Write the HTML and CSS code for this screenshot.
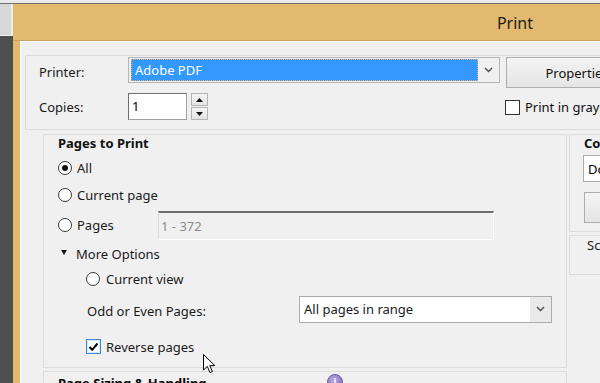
FILE: index.html
```html
<!DOCTYPE html>
<html lang="en">
<head>
    <meta charset="UTF-8">
    <title>Print</title>
    <link rel="stylesheet" href="styles.css">
</head>
<body>

<div class="topline"></div>
<div class="screen">
    <div class="side"><div class="side-tab"></div></div>

    <div class="win">
        <div class="titlebar">Print</div>
        <div class="frame">
            <div class="client">

                <!-- printer / copies -->
                <div class="printer-panel">
                    <div class="prow prow-printer">
                        <span class="plabel">Printer:</span>
                        <div class="combo combo-printer">
                            <span class="combo-value"><span class="selected">Adobe PDF</span></span>
                            <span class="combo-arrow">
                                <svg width="9" height="6" viewBox="0 0 9 6"><path d="M1 1 L4.5 4.5 L8 1" fill="none" stroke="#4a4a4a" stroke-width="1.4"/></svg>
                            </span>
                        </div>
                        <button class="btn btn-props">Properties</button>
                    </div>
                    <div class="prow prow-copies">
                        <span class="plabel">Copies:</span>
                        <div class="spin-input">1</div>
                        <div class="spinner">
                            <span class="spin-btn">
                                <svg width="7" height="4" viewBox="0 0 7 4"><path d="M0 4 L3.5 0 L7 4 Z" fill="#111"/></svg>
                            </span>
                            <span class="spin-btn">
                                <svg width="7" height="4" viewBox="0 0 7 4"><path d="M0 0 L3.5 4 L7 0 Z" fill="#111"/></svg>
                            </span>
                        </div>
                        <label class="check check-gray"><span class="box"></span>Print in grayscale (black and white)</label>
                    </div>
                </div>

                <div class="main">
                    <!-- Pages to Print -->
                    <div class="group pages-group">
                        <div class="group-title">Pages to Print</div>
                        <div class="opt opt-all"><span class="radio checked"></span>All</div>
                        <div class="opt opt-current"><span class="radio"></span>Current page</div>
                        <div class="opt opt-pages">
                            <span class="radio"></span><span class="opt-pages-label">Pages</span>
                            <div class="range-input">1 - 372</div>
                        </div>
                        <div class="opt opt-more"><span class="tri"></span>More Options</div>
                        <div class="opt opt-view"><span class="radio"></span>Current view</div>
                        <div class="opt opt-odd">
                            <span class="odd-label">Odd or Even Pages:</span>
                            <div class="combo combo-odd">
                                <span class="combo-value">All pages in range</span>
                                <span class="combo-arrow">
                                    <svg width="9" height="6" viewBox="0 0 9 6"><path d="M1 1 L4.5 4.5 L8 1" fill="none" stroke="#4a4a4a" stroke-width="1.4"/></svg>
                                </span>
                            </div>
                        </div>
                        <div class="opt opt-reverse">
                            <span class="box checked">
                                <svg width="11" height="10" viewBox="0 0 11 10"><path d="M1.5 5 L4.2 7.8 L9.5 1.5" fill="none" stroke="#000" stroke-width="2"/></svg>
                            </span>Reverse pages
                        </div>
                    </div>

                    <!-- right column -->
                    <div class="right-col">
                        <div class="group comments-group">
                            <div class="group-title">Comments &amp; Forms</div>
                            <div class="combo combo-comments"><span class="combo-value">Document and Markups</span></div>
                            <button class="btn btn-summarize">Summarize Comments</button>
                        </div>
                        <div class="group scale-group">
                            <div class="scale-text">Scale: 100%</div>
                        </div>
                    </div>
                </div>

                <div class="group sizing-group">
                    <div class="sizing-title">
                        <span class="sizing-text">Page Sizing &amp; Handling</span>
                        <span class="info">i</span>
                    </div>
                </div>

            </div>
        </div>
    </div>
</div>

<svg class="cursor" width="13" height="20" viewBox="0 0 13 20">
    <path d="M0.5 0.5 L0.5 16 L4.3 12.4 L7 18.6 L9.4 17.6 L6.8 11.6 L11.8 11.6 Z" fill="#fff" stroke="#000" stroke-width="1" stroke-linejoin="round"/>
</svg>

</body>
</html>
```

FILE: styles.css
```css
body {
    margin: 0;
    width: 600px;
    height: 383px;
    overflow: hidden;
    position: relative;
    font-family: 'Noto Sans', 'DejaVu Sans', sans-serif;
    font-size: 13px;
    color: #000;
    background: #4f4f4f;
}

.topline {
    height: 3px;
    background: #e9e9e9;
    border-bottom: 1px solid #707070;
}

.screen {
    display: flex;
    height: 379px;
}

/* left bit of the app behind the dialog */
.side {
    width: 13px;
    flex-shrink: 0;
    background: #4f4f4f;
}

.side-tab {
    height: 31px;
    background: #d7d7d7;
    border-right: 2px solid #ededed;
    border-bottom: 1px solid #f2f2f2;
}

.win {
    flex: 1;
    display: flex;
    flex-direction: column;
    background: #e2b96f;
    min-width: 0;
}

.titlebar {
    height: 37px;
    border-bottom: 1px solid #c9a35f;
    display: flex;
    align-items: center;
    justify-content: flex-end;
    padding-right: 67px;
    padding-top: 2px;
    box-sizing: border-box;
    font-size: 16px;
    color: #1e1e1e;
}

.frame {
    flex: 1;
    display: flex;
    padding-left: 7px;
    min-height: 0;
}

.client {
    flex: 1;
    background: #f0f0f0;
    border-left: 1px solid #fff;
    border-top: 1px solid #fff;
    padding: 13px 0 0 4px;
    overflow: hidden;
    white-space: nowrap;
}

/* printer panel */
.printer-panel {
    border: 1px solid #dadada;
    border-right: none;
    padding: 1px 0 9px 13px;
}

.prow {
    display: flex;
    align-items: flex-start;
}

.prow > * {
    flex-shrink: 0;
}

.plabel {
    width: 89px;
    line-height: 20px;
    color: #1a1a1a;
}

.prow-printer .plabel {
    padding-top: 5px;
}

.combo {
    display: flex;
    box-sizing: border-box;
    border: 1px solid #acacac;
    background: #fff;
}

.combo-value {
    flex: 1;
    display: flex;
    align-items: center;
    padding-left: 4px;
    overflow: hidden;
}

.combo-arrow {
    width: 21px;
    display: flex;
    align-items: center;
    justify-content: center;
    background: #eaeaea;
}

.combo-printer {
    width: 372px;
    height: 26px;
    background: #f0f0f0;
    border-color: #b5b5b5;
}

.combo-printer .combo-value {
    padding: 1px 0 1px 2px;
}

.selected {
    display: flex;
    align-items: center;
    width: 100%;
    height: 100%;
    box-sizing: border-box;
    background: #3399ff;
    color: #fff;
    padding-left: 3px;
    border: 1px dotted #e8a86a;
}

.combo-printer .combo-arrow {
    background: #f0f0f0;
}

.btn {
    font-family: inherit;
    font-size: 13px;
    color: #111;
    border: 1px solid #adadad;
    background: linear-gradient(#f3f3f3, #e5e5e5);
    padding: 0;
    white-space: nowrap;
}

.btn-props {
    width: 142px;
    height: 31px;
    margin-left: 6px;
}

.prow-copies {
    margin-top: 5px;
}

.prow-copies .plabel {
    padding-top: 4px;
}

.spin-input {
    width: 59px;
    height: 27px;
    box-sizing: border-box;
    background: #fff;
    border: 1px solid #a0a0a0;
    border-top-color: #707070;
    border-left-color: #707070;
    padding: 3px 0 0 3px;
    line-height: 18px;
}

.spinner {
    margin-left: 4px;
    display: flex;
    flex-direction: column;
    gap: 1px;
}

.spin-btn {
    width: 17px;
    height: 13px;
    box-sizing: border-box;
    border: 1px solid #b4b4b4;
    background: linear-gradient(#f4f4f4, #e4e4e4);
    display: flex;
    align-items: center;
    justify-content: center;
}

.check {
    display: flex;
    align-items: center;
    gap: 5px;
    color: #111;
}

.check-gray {
    margin-left: 297px;
    margin-top: 5px;
}

.box {
    width: 13px;
    height: 13px;
    border: 1px solid #333;
    background: #fff;
    display: inline-flex;
    align-items: center;
    justify-content: center;
    flex-shrink: 0;
}

.box.checked {
    border-color: #3c8ad6;
    box-shadow: inset 0 0 0 1px #d8eaff;
}

/* groups */
.main {
    display: flex;
    gap: 2px;
    margin-top: 4px;
    padding-left: 18px;
}

.main > * {
    flex-shrink: 0;
}

.group {
    border: 1px solid #dcdcdc;
    box-sizing: border-box;
}

.group-title {
    font-weight: bold;
    line-height: 16px;
    color: #111;
}

.pages-group {
    width: 524px;
    height: 234px;
    padding-left: 14px;
}

.opt {
    display: flex;
    align-items: center;
    color: #1a1a1a;
}

.radio {
    width: 12px;
    height: 12px;
    border: 1px solid #3a3a3a;
    border-radius: 50%;
    background: #fff;
    margin-right: 5px;
    display: inline-flex;
    align-items: center;
    justify-content: center;
    flex-shrink: 0;
}

.radio.checked::after {
    content: "";
    width: 6px;
    height: 6px;
    border-radius: 50%;
    background: #111;
}

.opt-all {
    margin-top: 2px;
    height: 29px;
}

.opt-current {
    height: 26px;
}

.opt-pages {
    height: 34px;
}

.opt-pages-label {
    width: 81px;
}

.range-input {
    width: 336px;
    height: 29px;
    box-sizing: border-box;
    border: 1px solid #dcdcdc;
    border-top: 2px solid #6e6e6e;
    border-right-color: #fff;
    border-bottom-color: #fff;
    color: #8c8c8c;
    padding-left: 2px;
    display: flex;
    align-items: center;
}

.opt-more {
    height: 24px;
}

.tri {
    width: 0;
    height: 0;
    border-left: 3.5px solid transparent;
    border-right: 3.5px solid transparent;
    border-top: 5px solid #111;
    margin: 0 9px 3px 3px;
}

.opt-view {
    height: 26px;
    padding-left: 28px;
}

.opt-view .radio {
    margin-right: 6px;
}

.opt-odd {
    height: 34px;
    padding-left: 29px;
}

.odd-label {
    width: 212px;
    padding-top: 3px;
}

.combo-odd {
    width: 253px;
    height: 27px;
}

.opt-reverse {
    height: 37px;
    padding-left: 28px;
    padding-top: 2px;
}

.opt-reverse .box {
    margin-right: 5px;
}

/* right column */
.right-col {
    width: 200px;
    display: flex;
    flex-direction: column;
    gap: 3px;
}

.comments-group {
    height: 98px;
    padding-left: 14px;
}

.combo-comments {
    width: 180px;
    height: 27px;
    margin: 4px 0 0 -1px;
}

.btn-summarize {
    width: 180px;
    height: 31px;
    margin-top: 10px;
    display: block;
}

.scale-group {
    height: 40px;
    padding-left: 17px;
}

.scale-text {
    line-height: 16px;
    margin-top: 1px;
    color: #222;
}

/* next group, cut by the window */
.sizing-group {
    margin: 3px 0 0 18px;
    width: 524px;
    height: 30px;
    padding-left: 14px;
}

.sizing-title {
    display: flex;
    align-items: flex-start;
    font-weight: bold;
    line-height: 16px;
    padding-top: 3px;
}

.sizing-text {
    width: 269px;
}

.info {
    width: 14px;
    height: 14px;
    border-radius: 50%;
    background: radial-gradient(circle at 40% 35%, #b7a9e6, #7665b6);
    border: 1px solid #6a5aa5;
    color: #fff;
    font-size: 10px;
    line-height: 14px;
    text-align: center;
    margin-top: -1px;
}

.cursor {
    position: absolute;
    left: 203px;
    top: 354px;
}
```
